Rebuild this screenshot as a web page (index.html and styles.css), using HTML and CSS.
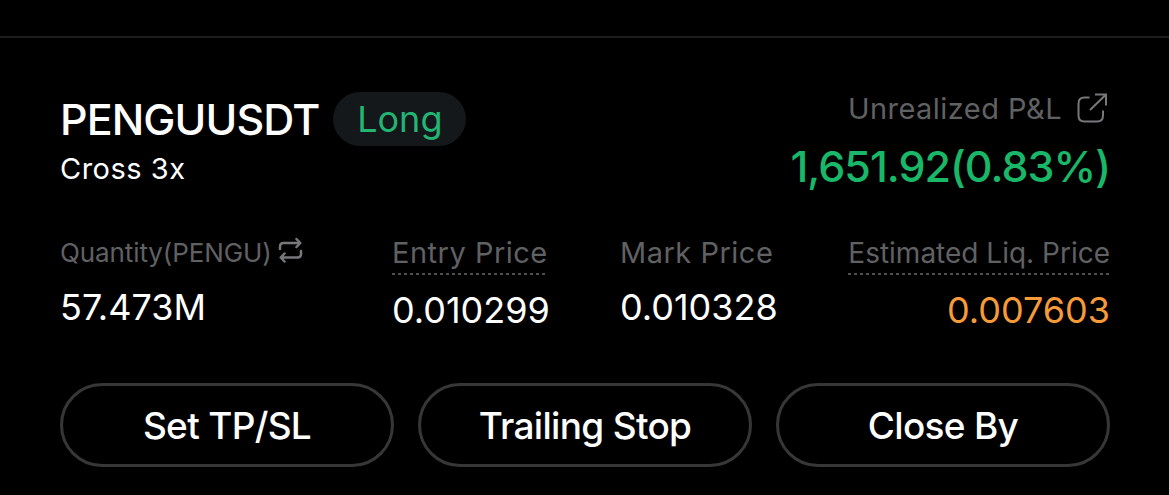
FILE: index.html
```html
<!DOCTYPE html>
<html lang="en">

<head>
    <meta charset="UTF-8">
    <meta name="viewport" content="width=device-width, initial-scale=1.0">
    <title>Positions</title>
    <link rel="stylesheet" href="styles.css">
</head>

<body>

    <div class="position">
        <div class="head">
            <div class="symbol">
                <div class="title">
                    <h2>PENGUUSDT</h2>
                    <span class="side">Long</span>
                </div>
                <p class="margin-mode">Cross 3x</p>
            </div>
            <div class="pnl">
                <div class="pnl-label">
                    <span>Unrealized P&amp;L</span>
                    <svg class="share" width="32" height="32" viewBox="0 0 32 32">
                        <path d="M13.5 5.500H8.500Q2.500 5.500 2.500 11.500V23.500Q2.500 29.500 8.500 29.500H21Q27 29.500 27 23.500V18.500M19 2.500H30V13.500M29.500 3L14 18" />
                    </svg>
                </div>
                <p class="pnl-value">1,651.92(0.83%)</p>
            </div>
        </div>

        <ul class="stats">
            <li class="quantity">
                <div class="label">
                    <span>Quantity(PENGU)</span>
                    <svg class="swap" width="26" height="28" viewBox="0 0 26 28">
                        <path d="M2 13V10.500Q2 7 5.500 7H22M18.500 3L22.300 7L18.500 11M23 15V18Q23 21.500 19.500 21.500H3M6.500 17.500L2.700 21.500L6.500 25.500" />
                    </svg>
                </div>
                <p class="value">57.473M</p>
            </li>
            <li class="entry">
                <div class="label"><span class="dashed">Entry Price</span></div>
                <p class="value">0.010299</p>
            </li>
            <li class="mark">
                <div class="label"><span>Mark Price</span></div>
                <p class="value">0.010328</p>
            </li>
            <li class="liq">
                <div class="label"><span class="dashed">Estimated Liq. Price</span></div>
                <p class="value">0.007603</p>
            </li>
        </ul>

        <div class="btn-box">
            <button>Set TP/SL</button>
            <button>Trailing Stop</button>
            <button>Close By</button>
        </div>
    </div>

</body>

</html>
```
FILE: styles.css
```css
* {
    margin: 0;
    padding: 0;
    box-sizing: border-box;
}

body {
    height: 495px;
    padding-top: 36px;
    background: #000;
    color: #fff;
    font-family: Inter, "Liberation Sans", sans-serif;
    overflow: hidden;
}

ul {
    list-style: none;
}

.position {
    border-top: 2px solid #1c1c1c;
    padding: 51px 59px 0 60px;
}

.head {
    display: flex;
    justify-content: space-between;
    height: 147px;
}

.title {
    display: flex;
    align-items: center;
    gap: 14px;
    height: 59px;
}

.title h2 {
    font-size: 43px;
    font-weight: 500;
    letter-spacing: -0.9px;
    line-height: 59px;
    padding-top: 2px;
}

.side {
    width: 133px;
    height: 54px;
    border-radius: 27px;
    background: #15181b;
    color: #22b573;
    font-size: 36px;
    line-height: 55px;
    text-align: center;
}

.margin-mode {
    font-size: 29px;
    letter-spacing: 0.5px;
    line-height: 42px;
}

.pnl {
    text-align: right;
}

.pnl-label {
    display: flex;
    align-items: center;
    justify-content: flex-end;
    gap: 14px;
    height: 38px;
    padding-right: 2px;
    color: #606163;
    font-size: 29px;
    letter-spacing: 0.45px;
}

.share,
.swap {
    fill: none;
    stroke: #77787a;
    stroke-width: 2;
}

.swap {
    stroke-width: 2.5;
    stroke-linecap: round;
    stroke-linejoin: round;
}

.pnl-value {
    color: #18b868;
    font-size: 43px;
    font-weight: 500;
    letter-spacing: -1px;
    line-height: 78px;
}

.stats {
    display: grid;
    grid-template-columns: 332px 228px 1fr auto;
    height: 147px;
}

.label {
    display: flex;
    align-items: flex-start;
    height: 44px;
    color: #606163;
    font-size: 29px;
    letter-spacing: 0.5px;
    line-height: 34px;
}

.dashed {
    height: 39px;
    background: repeating-linear-gradient(to right, #4e4f51 0 3.5px, transparent 3.5px 6px) bottom / 100% 2px no-repeat;
}

.value {
    font-size: 36px;
    line-height: 54px;
}

.entry .value,
.liq .value {
    padding-top: 3px;
}

.quantity .label {
    gap: 6px;
    font-size: 26px;
    letter-spacing: -0.1px;
}

.liq {
    text-align: right;
}

.liq .label {
    font-size: 28px;
    letter-spacing: 0;
}

.liq .value {
    color: #f79a3a;
}

.btn-box {
    display: flex;
    gap: 24px;
}

.btn-box button {
    flex: 1;
    height: 84px;
    border: 3px solid #373737;
    border-radius: 42px;
    background: none;
    color: #fff;
    font-family: inherit;
    font-size: 37px;
    font-weight: 500;
    letter-spacing: -0.7px;
}
```
